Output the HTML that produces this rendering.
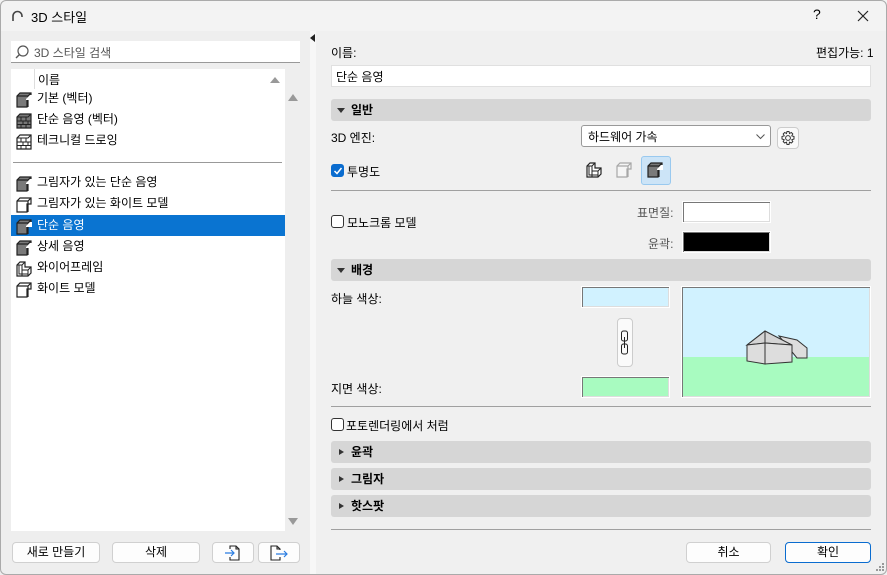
<!DOCTYPE html>
<html><head><meta charset="utf-8"><style>
*{box-sizing:border-box;margin:0;padding:0}
body{width:887px;height:575px;overflow:hidden;background:#f0f0f0;font-family:"Liberation Sans","Noto Sans CJK KR",sans-serif;font-size:12px;color:#000;position:relative}
.a{position:absolute}
.t{white-space:nowrap}
.btn{position:absolute;background:#fdfdfd;border:1px solid #d0d0d0;border-radius:4px;text-align:center;line-height:19px;font-size:12px}
.sec{position:absolute;left:331px;width:540px;height:22px;background:#d6d6d6;border-radius:3px;font-weight:bold;line-height:22px;padding-left:20px;font-size:12px}
.sec:before{content:"";position:absolute;left:8px;top:8px;border-left:5px solid #333;border-top:3px solid transparent;border-bottom:3px solid transparent}
.sec.o:before{left:6px;top:9px;border-top:5px solid #333;border-left:4px solid transparent;border-right:4px solid transparent;border-bottom:0}
.hr{position:absolute;left:331px;width:540px;height:1px;background:#a0a0a0}
.li{position:absolute;left:11px;width:274px;height:21px;line-height:21px;padding-left:26px}
.li svg{position:absolute;left:4px;top:2px}
.cb{position:absolute;width:13px;height:13px;border:1px solid #333;border-radius:3px;background:#fff}
.sw{position:absolute;border:1px solid #fff;box-shadow:inset 1px 1px 0 #777,inset -1px -1px 0 #ddd}
</style></head><body>
<svg width="0" height="0" style="position:absolute"><defs>
<g id="cf"><path d="M2 6 L5 3 L16 3 L16 9 L12 9 L12 17 L2 17 Z" fill="#7a7a7a" stroke="#222" stroke-width="1.2"/><path d="M2 6 L13 6 L16 3 M13 6 L13 17" fill="none" stroke="#222" stroke-width="1.2"/><path d="M11 9 L15 5 L17 5 L17 10 L11 10 Z" fill="#fff"/></g>
<g id="cw"><path d="M2 6 L5 3 L16 3 L16 9 L12 9 L12 17 L2 17 Z" fill="#fff" stroke="#222" stroke-width="1.2"/><path d="M2 6 L13 6 L16 3 M13 6 L13 17" fill="none" stroke="#222" stroke-width="1.2"/></g>
<g id="cb"><path d="M2 6 L5 3 L16 3 L16 17 L2 17 Z" fill="#777" stroke="#222" stroke-width="1.2"/><path d="M2 10 H16 M2 13.5 H16 M6 6 V10 M11 6V10 M8 10V13.5 M13 10V13.5 M6 13.5V17 M11 13.5V17 M2 6 H13 L16 3" stroke="#222" fill="none" stroke-width="1"/></g>
<g id="cbw"><path d="M2 6 L5 3 L16 3 L16 17 L2 17 Z" fill="#fff" stroke="#222" stroke-width="1.2"/><path d="M2 10 H16 M2 13.5 H16 M6 6 V10 M11 6V10 M8 10V13.5 M13 10V13.5 M6 13.5V17 M11 13.5V17 M2 6 H13 L16 3" stroke="#222" fill="none" stroke-width="1"/></g>
<g id="cwf"><path d="M2 6 L5 3 L10 3 L10 8 L16 8 L16 14 L13 17 L2 17 Z" fill="#fff" stroke="#222" stroke-width="1.2"/><path d="M2 6 H7 L10 3 M7 6 V17 M7 11 H13 L16 8 M13 11 V17 M4 6 V15 H13" fill="none" stroke="#222" stroke-width="1"/></g>
</defs></svg>

<!-- title bar -->
<div class="a" style="left:0;top:0;width:887px;height:31px;background:#f3f3f3"></div>
<svg class="a" style="left:11px;top:10px" width="12" height="12"><path d="M2 11 V6 A4.5 4.5 0 0 1 11 6 V7" fill="none" stroke="#444" stroke-width="1.6"/></svg>
<div class="a t" style="left:31px;top:7px;font-size:13px">3D 스타일</div>
<div class="a t" style="left:813px;top:6px;font-size:14px">?</div>
<svg class="a" style="left:857px;top:10px" width="12" height="12"><path d="M1 1 L11 11 M11 1 L1 11" stroke="#222" stroke-width="1.2"/></svg>

<!-- left panel -->
<div class="a" style="left:0;top:31px;width:310px;height:544px;background:#eeeeee"></div>
<div class="a" style="left:310px;top:31px;width:6px;height:544px;background:#f7f7f7"></div>
<svg class="a" style="left:310px;top:34px" width="6" height="8"><path d="M5 0 L0 4 L5 8Z" fill="#222"/></svg>
<div class="a" style="left:11px;top:41px;width:289px;height:22px;background:#fff;border-bottom:1px solid #999"></div>
<svg class="a" style="left:15px;top:45px" width="15" height="15"><circle cx="8" cy="6" r="5" fill="none" stroke="#555" stroke-width="1.2"/><path d="M4.5 9.5 L1 13" stroke="#555" stroke-width="1.4"/></svg>
<div class="a t" style="left:34px;top:44px;color:#555">3D 스타일 검색</div>
<div class="a" style="left:11px;top:69px;width:274px;height:462px;background:#fff"></div>
<div class="a" style="left:34px;top:69px;width:1px;height:20px;background:#ddd"></div>
<div class="a t" style="left:38px;top:71px">이름</div>
<svg class="a" style="left:270px;top:77px" width="10" height="6"><path d="M0 6 L5 0 L10 6Z" fill="#999"/></svg>
<svg class="a" style="left:288px;top:94px" width="10" height="7"><path d="M0 7 L5 0 L10 7Z" fill="#999"/></svg>
<svg class="a" style="left:288px;top:518px" width="10" height="7"><path d="M0 0 L5 7 L10 0Z" fill="#999"/></svg>
<div class="li" style="top:88px"><svg width="20" height="20"><use href="#cf"/></svg>기본 (벡터)</div>
<div class="li" style="top:109px"><svg width="20" height="20"><use href="#cb"/></svg>단순 음영 (벡터)</div>
<div class="li" style="top:130px"><svg width="20" height="20"><use href="#cbw"/></svg>테크니컬 드로잉</div>
<div class="a" style="left:13px;top:162px;width:269px;height:1px;background:#999"></div>
<div class="li" style="top:172px"><svg width="20" height="20"><use href="#cf"/></svg>그림자가 있는 단순 음영</div>
<div class="li" style="top:193px"><svg width="20" height="20"><use href="#cw"/></svg>그림자가 있는 화이트 모델</div>
<div class="li" style="top:215px;background:#0a74d1;color:#fff"><svg width="20" height="20"><use href="#cf"/></svg>단순 음영</div>
<div class="li" style="top:236px"><svg width="20" height="20"><use href="#cf"/></svg>상세 음영</div>
<div class="li" style="top:257px"><svg width="20" height="20"><use href="#cwf"/></svg>와이어프레임</div>
<div class="li" style="top:278px"><svg width="20" height="20"><use href="#cw"/></svg>화이트 모델</div>
<div class="btn" style="left:12px;top:542px;width:88px;height:21px">새로 만들기</div>
<div class="btn" style="left:112px;top:542px;width:88px;height:21px">삭제</div>
<div class="btn" style="left:212px;top:542px;width:42px;height:21px"><svg width="20" height="17" style="margin-top:1px"><path d="M7 5 V2 H13 L16 5 V16 H7 V13 M13 2 V5 H16" fill="none" stroke="#222" stroke-width="1.1"/><path d="M2 9 H11 M8 6 L11 9 L8 12" fill="none" stroke="#2a7de1" stroke-width="1.2"/></svg></div>
<div class="btn" style="left:258px;top:542px;width:42px;height:21px"><svg width="22" height="17" style="margin-top:1px"><path d="M12 13 V16 H3 V2 H9 L12 5 V6 M9 2 V5 H12" fill="none" stroke="#222" stroke-width="1.1"/><path d="M8 10 H19 M16 7 L19 10 L16 13" fill="none" stroke="#2a7de1" stroke-width="1.2"/></svg></div>

<!-- right panel -->
<div class="a t" style="left:331px;top:44px">이름:</div>
<div class="a t" style="left:816px;top:44px">편집가능: 1</div>
<div class="a" style="left:331px;top:65px;width:540px;height:22px;background:#fff;border:1px solid #e0e0e0"></div>
<div class="a t" style="left:336px;top:68px">단순 음영</div>
<div class="sec o" style="top:99px">일반</div>
<div class="a t" style="left:331px;top:129px">3D 엔진:</div>
<div class="a" style="left:581px;top:125px;width:190px;height:22px;background:#fff;border:1px solid #999;border-radius:3px"></div>
<div class="a t" style="left:588px;top:128px">하드웨어 가속</div>
<svg class="a" style="left:756px;top:134px" width="9" height="6"><path d="M0.5 0.5 L4.5 4.5 L8.5 0.5" fill="none" stroke="#555"/></svg>
<div class="a" style="left:777px;top:127px;width:22px;height:22px;background:#fafafa;border:1px solid #ccc;border-radius:4px"></div>
<svg class="a" style="left:780px;top:130px" width="16" height="16"><circle cx="8" cy="8" r="2.4" fill="none" stroke="#333"/><path d="M7 1.5 H9 L9.5 3.5 L11.3 2.5 L12.8 4 L11.8 5.8 L14 6.5 V9 L11.8 9.8 L12.8 11.6 L11.3 13 L9.5 12.2 L9 14.5 H7 L6.5 12.2 L4.7 13 L3.2 11.6 L4.2 9.8 L2 9 V6.5 L4.2 5.8 L3.2 4 L4.7 2.5 L6.5 3.5 Z" fill="none" stroke="#333"/></svg>
<div class="cb" style="left:331px;top:164px;background:#0a6ccf;border-color:#0a6ccf"></div>
<svg class="a" style="left:333px;top:166px" width="10" height="10"><path d="M1.5 5 L4 7.5 L8.5 2" fill="none" stroke="#fff" stroke-width="1.5"/></svg>
<div class="a t" style="left:347px;top:163px">투명도</div>
<svg class="a" style="left:585px;top:160px" width="20" height="20"><use href="#cwf"/></svg>
<svg class="a" style="left:615px;top:160px;opacity:.35" width="20" height="20"><use href="#cw"/></svg>
<div class="a" style="left:641px;top:156px;width:30px;height:29px;background:#cce4f7;border:1px solid #99c9ef;border-radius:3px"></div>
<svg class="a" style="left:646px;top:160px" width="20" height="20"><use href="#cf"/></svg>
<div class="hr" style="top:190px"></div>
<div class="cb" style="left:331px;top:215px"></div>
<div class="a t" style="left:347px;top:214px">모노크롬 모델</div>
<div class="a t" style="left:637px;top:204px;color:#555">표면질:</div>
<div class="sw" style="left:682px;top:201px;width:89px;height:22px;background:#fff"></div>
<div class="a t" style="left:648px;top:235px;color:#555">윤곽:</div>
<div class="sw" style="left:682px;top:231px;width:89px;height:22px;background:#000"></div>
<div class="sec o" style="top:259px">배경</div>
<div class="a t" style="left:331px;top:290px">하늘 색상:</div>
<div class="sw" style="left:581px;top:286px;width:89px;height:22px;background:#d1f2ff"></div>
<div class="a" style="left:617px;top:318px;width:16px;height:49px;background:#fafafa;border:1px solid #ccc;border-radius:4px"></div>
<svg class="a" style="left:620px;top:330px" width="10" height="26"><rect x="1.5" y="1" width="6" height="10" rx="2" fill="none" stroke="#222"/><rect x="1.5" y="14" width="6" height="10" rx="2" fill="none" stroke="#222"/><path d="M4.5 7 V18" stroke="#222"/></svg>
<div class="a t" style="left:331px;top:380px">지면 색상:</div>
<div class="sw" style="left:581px;top:376px;width:89px;height:22px;background:#a8fbc0"></div>
<div class="sw" style="left:681px;top:286px;width:190px;height:112px;background:linear-gradient(#d1f2ff 0,#d1f2ff 70px,#a8fbc0 70px)"></div>
<svg class="a" style="left:745px;top:328px" width="66" height="40"><path d="M34 8 L52 12 L62 20 L62 30 L52 30 Z" fill="#ddd" stroke="#333" stroke-width="1"/><path d="M2 17 L20 3 L38 14 L26 12 Z" fill="#ccc" stroke="#333"/><path d="M2 17 L20 3 L47 17 L20 15 Z" fill="#d4d4d4" stroke="#333"/><path d="M2 17 L20 15 L20 36 L2 33 Z" fill="#ddd" stroke="#333"/><path d="M20 15 L47 17 L47 34 L20 36 Z" fill="#ddd" stroke="#333"/><path d="M20 3 L20 15" stroke="#333"/></svg>
<div class="hr" style="top:406px"></div>
<div class="cb" style="left:331px;top:418px"></div>
<div class="a t" style="left:346px;top:417px">포토렌더링에서 처럼</div>
<div class="sec" style="top:441px">윤곽</div>
<div class="sec" style="top:468px">그림자</div>
<div class="sec" style="top:495px">핫스팟</div>
<div class="hr" style="top:529px"></div>
<div class="btn" style="left:686px;top:542px;width:85px;height:21px">취소</div>
<div class="btn" style="left:785px;top:542px;width:86px;height:21px;border:1px solid #0a6ccf">확인</div>
<svg class="a" style="left:876px;top:563px" width="9" height="9"><g fill="#999"><rect x="6" y="0" width="2" height="2"/><rect x="3" y="3" width="2" height="2"/><rect x="6" y="3" width="2" height="2"/><rect x="0" y="6" width="2" height="2"/><rect x="3" y="6" width="2" height="2"/><rect x="6" y="6" width="2" height="2"/></g></svg>
<div class="a" style="left:0;top:0;width:887px;height:575px;border:1px solid #aaa;border-radius:6px;pointer-events:none"></div>
</body></html>
